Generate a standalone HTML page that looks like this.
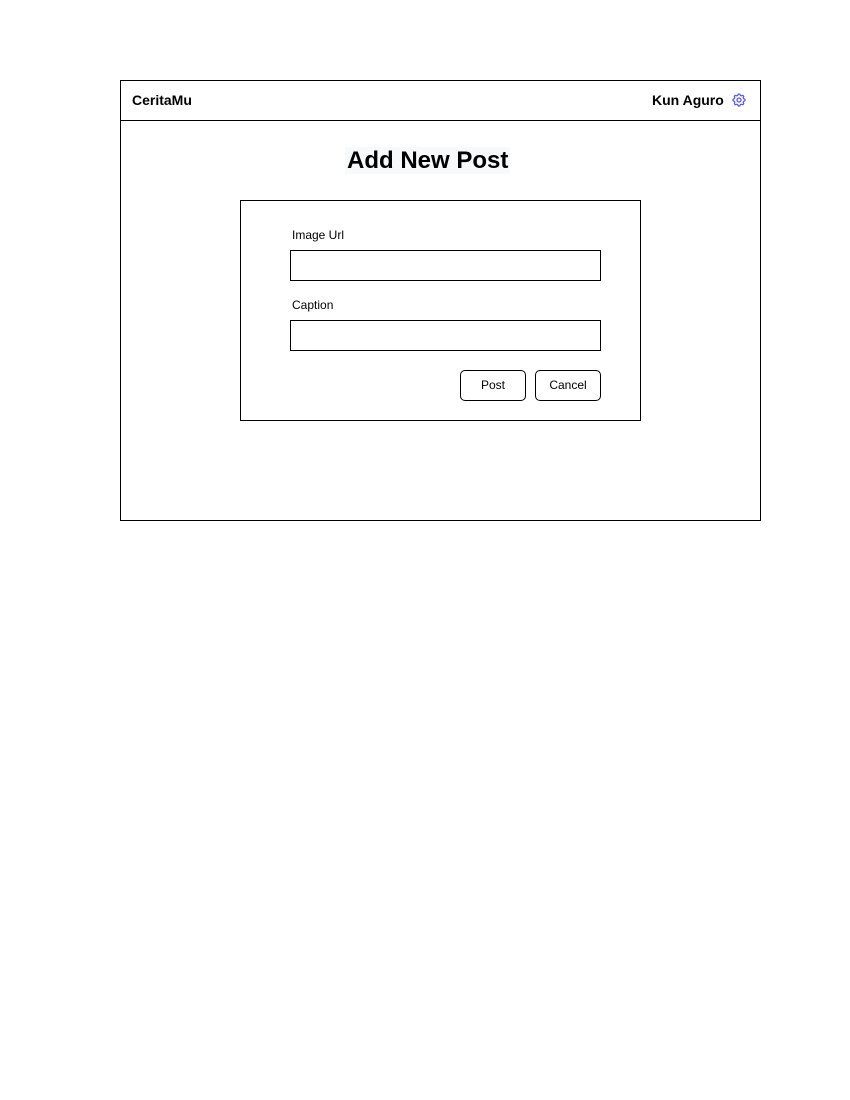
<!DOCTYPE html>
<html><head><style>
body{margin:0;width:850px;height:1100px;background:#fff;font-family:"Liberation Sans",sans-serif;position:relative;color:#000}
.a{position:absolute;box-sizing:border-box}
</style></head><body>
<div class="a" style="left:120px;top:80px;width:641px;height:441px;border:1px solid #000"></div>
<div class="a" style="left:120px;top:120px;width:641px;height:1px;background:#000"></div>
<div class="a" style="left:132px;top:92px;font-size:14px;font-weight:bold">CeritaMu</div>
<div class="a" style="left:652px;top:92px;font-size:14px;font-weight:bold">Kun Aguro</div>
<svg class="a" style="left:731px;top:92px" width="16" height="16" viewBox="0 0 24 24" fill="none" stroke="#5b5bf0" stroke-width="2"><path d="M10.3 4.3c.4-1.7 3-1.7 3.4 0a1.7 1.7 0 0 0 2.6 1.1c1.5-.9 3.3.8 2.4 2.4a1.7 1.7 0 0 0 1 2.5c1.8.4 1.8 3 0 3.4a1.7 1.7 0 0 0-1 2.6c.9 1.5-.9 3.3-2.4 2.4a1.7 1.7 0 0 0-2.6 1c-.4 1.8-3 1.8-3.4 0a1.7 1.7 0 0 0-2.6-1c-1.5.9-3.3-.9-2.4-2.4a1.7 1.7 0 0 0-1-2.6c-1.8-.4-1.8-3 0-3.4a1.7 1.7 0 0 0 1-2.5c-.9-1.6.9-3.3 2.4-2.4a1.7 1.7 0 0 0 2.6-1.1z"/><circle cx="12" cy="12" r="3"/></svg>
<div class="a" style="left:345px;top:147px;width:165px;height:27px;background:#f8f9fa"></div>
<div class="a" style="left:347px;top:147px;font-size:24px;font-weight:bold;line-height:28px">Add New Post</div>
<div class="a" style="left:240px;top:200px;width:401px;height:221px;border:1px solid #000"></div>
<div class="a" style="left:292px;top:228px;font-size:12px">Image Url</div>
<div class="a" style="left:290px;top:250px;width:311px;height:31px;border:1px solid #000"></div>
<div class="a" style="left:292px;top:298px;font-size:12px">Caption</div>
<div class="a" style="left:290px;top:320px;width:311px;height:31px;border:1px solid #000"></div>
<div class="a" style="left:460px;top:370px;width:66px;height:31px;border:1px solid #000;border-radius:5px;font-size:12px;text-align:center;line-height:29px">Post</div>
<div class="a" style="left:535px;top:370px;width:66px;height:31px;border:1px solid #000;border-radius:5px;font-size:12px;text-align:center;line-height:29px">Cancel</div>
</body></html>
